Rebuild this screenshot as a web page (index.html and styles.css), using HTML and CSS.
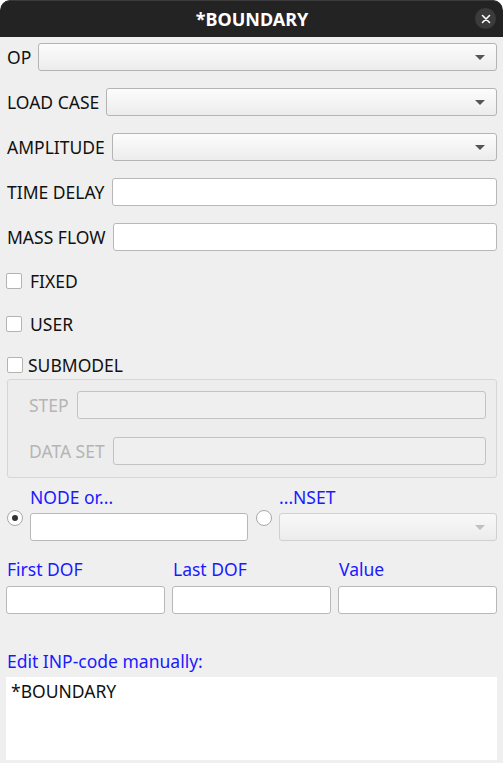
FILE: index.html
```html
<!DOCTYPE html>
<html>
<head>
<meta charset="utf-8">
<title>*BOUNDARY</title>
<link rel="stylesheet" href="styles.css">
</head>
<body>
<div class="window">
  <header class="titlebar">
    <span class="title">*BOUNDARY</span>
    <button class="close" aria-label="Close">
      <svg width="10" height="10" viewBox="0 0 10 10"><path d="M1.5 1.5 L8.5 8.5 M8.5 1.5 L1.5 8.5" stroke="#fff" stroke-width="1.6" stroke-linecap="round"/></svg>
    </button>
  </header>
  <main class="form">
    <div class="row r-first"><label class="lbl">OP</label><div class="combo"><span class="arrow"></span></div></div>
    <div class="row"><label class="lbl">LOAD CASE</label><div class="combo"><span class="arrow"></span></div></div>
    <div class="row"><label class="lbl">AMPLITUDE</label><div class="combo"><span class="arrow"></span></div></div>
    <div class="row"><label class="lbl">TIME DELAY</label><div class="input"></div></div>
    <div class="row"><label class="lbl">MASS FLOW</label><div class="input"></div></div>

    <div class="check c-fixed"><span class="box"></span><span class="clabel">FIXED</span></div>
    <div class="check c-user"><span class="box"></span><span class="clabel">USER</span></div>
    <div class="check c-sub"><span class="box"></span><span class="clabel tight">SUBMODEL</span></div>

    <fieldset class="group">
      <div class="grow"><label class="lbl dis">STEP</label><div class="input disabled"></div></div>
      <div class="grow g2"><label class="lbl dis">DATA SET</label><div class="input disabled"></div></div>
    </fieldset>

    <div class="target">
      <div class="tcol node">
        <span class="radio checked"></span>
        <div class="tstack">
          <span class="blue">NODE or...</span>
          <div class="input"></div>
        </div>
      </div>
      <div class="tcol nset">
        <span class="radio"></span>
        <div class="tstack">
          <span class="blue">...NSET</span>
          <div class="combo disabled"><span class="arrow"></span></div>
        </div>
      </div>
    </div>

    <div class="dofs">
      <div class="dof"><span class="blue">First DOF</span><div class="input"></div></div>
      <div class="dof"><span class="blue">Last DOF</span><div class="input"></div></div>
      <div class="dof"><span class="blue">Value</span><div class="input"></div></div>
    </div>

    <div class="edit">
      <span class="blue">Edit INP-code manually:</span>
      <div class="code">*BOUNDARY</div>
    </div>
  </main>
</div>
</body>
</html>
```
FILE: styles.css
```css
* { box-sizing: border-box; }
html, body { margin: 0; padding: 0; background: #ffffff; }
body {
  font-family: "Noto Sans", "Open Sans", sans-serif;
  font-size: 17.5px;
  color: #111;
  width: 503px;
  height: 763px;
  overflow: hidden;
}
.window {
  background: #efefef;
  height: 763px;
  border-radius: 10px 10px 0 0;
  overflow: hidden;
}
.titlebar {
  height: 37px;
  background: #232323;
  border-radius: 10px 10px 0 0;
  box-shadow: inset 0 1px 0 #3a3a3a;
  display: flex;
  align-items: center;
  justify-content: center;
  position: relative;
}
.title {
  color: #ffffff;
  font-weight: bold;
  font-size: 18px;
  letter-spacing: 0;
  margin-left: 1px;
}
.close {
  position: absolute;
  right: 7px;
  top: 8px;
  width: 21px;
  height: 21px;
  border-radius: 50%;
  border: none;
  background: #3b3b3b;
  padding: 0;
  display: flex;
  align-items: center;
  justify-content: center;
}
.form { padding: 0 6px 0 7px; }
.row {
  display: flex;
  align-items: center;
  gap: 7px;
  height: 28px;
  margin-top: 17px;
}
.row.r-first { margin-top: 6px; }
.lbl { white-space: nowrap; }
.combo, .input {
  flex: 1;
  height: 28px;
  border-radius: 3px;
  position: relative;
}
.combo {
  border: 1px solid #b4b4b4;
  background: linear-gradient(#fcfcfc, #ececec);
}
.arrow {
  position: absolute;
  right: 11px;
  top: 11px;
  width: 0; height: 0;
  border-left: 5px solid transparent;
  border-right: 5px solid transparent;
  border-top: 5px solid #555;
}
.input {
  border: 1px solid #b8b8b8;
  background: #ffffff;
}
.input.disabled {
  background: #efefef;
  border-color: #c3c3c3;
}
.combo.disabled {
  border-color: #d0d0d0;
  background: linear-gradient(#f8f8f8, #ececec);
}
.combo.disabled .arrow { border-top-color: #c0c0c0; }

.check {
  display: flex;
  align-items: center;
  height: 16px;
  margin-left: -1px;
}
.c-fixed { margin-top: 22px; }
.c-user { margin-top: 27px; }
.c-sub { margin-top: 25px; margin-left: 0; }
.box {
  width: 16px; height: 16px;
  border: 1px solid #b3b3b3;
  border-radius: 2px;
  background: #fff;
  margin-right: 8px;
}
.clabel.tight { margin-left: -3px; }

.group {
  margin: 6px 0 0 0;
  padding: 11px 10px 12px 21px;
  border: 1px solid #d6d6d6;
  border-radius: 3px;
  background: #ededed;
  height: 99px;
  min-width: 0;
}
.grow {
  display: flex;
  align-items: center;
  gap: 8px;
  height: 28px;
}
.grow.g2 { margin-top: 18px; }
.lbl.dis { color: #b5b5b5; }

.target {
  display: flex;
  margin-top: 8px;
  gap: 8px;
}
.tcol { display: flex; align-items: flex-start; }
.node { width: 241px; }
.nset { flex: 1; }
.radio {
  width: 16px; height: 16px;
  border: 1px solid #a8a8a8;
  border-radius: 50%;
  background: #fff;
  margin-top: 24px;
  margin-right: 7px;
  flex: none;
  position: relative;
}
.radio.checked::after {
  content: "";
  position: absolute;
  left: 4px; top: 4px;
  width: 6px; height: 6px;
  border-radius: 50%;
  background: #333;
}
.tstack {
  flex: 1;
  display: flex;
  flex-direction: column;
}
.tstack .blue { height: 22px; line-height: 22px; margin-bottom: 5px; }
.tstack .input, .tstack .combo { flex: none; }

.blue { color: #1a1aff; }

.dofs {
  display: flex;
  gap: 7px;
  margin-top: 17px;
  margin-left: -1px;
}
.dof { flex: 1; display: flex; flex-direction: column; }
.dof .blue { height: 22px; line-height: 22px; margin-bottom: 6px; margin-left: 1px; }
.dof .input { flex: none; }

.edit { margin-top: 36px; margin-left: -1px; }
.edit .blue { display: block; height: 22px; line-height: 22px; margin-left: 1px; margin-bottom: 5px; }
.code {
  background: #fff;
  height: 83px;
  padding: 2px 5px;
  color: #111;
  line-height: 24px;
}
```
